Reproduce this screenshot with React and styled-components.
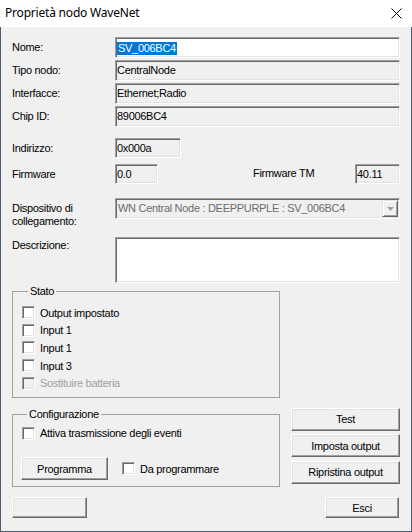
import React from "react";
import styled, { createGlobalStyle } from "styled-components";

const GlobalStyle = createGlobalStyle`
    * { box-sizing: border-box; }
    html, body { margin: 0; padding: 0; background: #f0f0f0; }
    body {
        font-family: "Liberation Sans", Arial, sans-serif;
        font-size: 11px;
        letter-spacing: -0.3px;
        color: #000;
    }
`;

const Window = styled.div`
    width: 412px;
    height: 532px;
    display: flex;
    flex-direction: column;
    background: #f0f0f0;
`;

const TitleBar = styled.div`
    height: 27px;
    flex-shrink: 0;
    display: flex;
    align-items: center;
    justify-content: space-between;
    background: #fff;
    padding: 0 10px 0 5px;
`;

const Title = styled.div`
    font-family: "Noto Sans", "Open Sans", sans-serif;
    font-size: 12px;
    letter-spacing: -0.2px;
    line-height: 16px;
    margin-top: -1px;
`;

const Close = styled.svg`
    width: 11px;
    height: 11px;
    display: block;
`;

const Body = styled.div`
    flex: 1;
    display: flex;
    flex-direction: column;
    padding: 10px 11px 0 11px;
    border: 1px solid #485d75;
    border-top: none;
`;

const FieldRow = styled.div`
    display: flex;
    align-items: ${(p) => (p.$start ? "flex-start" : "center")};
    margin-top: ${(p) => p.$top || 0}px;
`;

const Label = styled.div`
    width: 103px;
    flex-shrink: 0;
    line-height: 13px;
    padding-top: ${(p) => p.$pad || 0}px;
    white-space: nowrap;
`;

const SubLabel = styled.div`
    margin-left: 95px;
    line-height: 13px;
    margin-top: -2px;
    white-space: nowrap;
`;

const Field = styled.div`
    width: ${(p) => (p.$w ? `${p.$w}px` : "auto")};
    flex: ${(p) => (p.$w ? "0 0 auto" : "1")};
    height: ${(p) => p.$h || 21}px;
    margin-left: ${(p) => (p.$push ? "auto" : "0")};
    display: flex;
    align-items: ${(p) => (p.$tall ? "flex-start" : "center")};
    padding-left: 1px;
    background: ${(p) => (p.$edit ? "#fff" : "#f0f0f0")};
    border: 1px solid;
    border-color: #a0a0a0 #fff #fff #a0a0a0;
    box-shadow: inset 1px 1px 0 #696969, inset -1px -1px 0 #e3e3e3;
    line-height: 13px;
    white-space: nowrap;
    overflow: hidden;
`;

const Selected = styled.span`
    background: #0078d7;
    color: #fff;
    padding: 0 1px 0 1px;
    margin-top: 1px;
`;

const Combo = styled(Field)`
    color: #6d6d6d;
    padding-left: 2px;
    padding-right: 1px;
    justify-content: space-between;
`;

const ComboArrow = styled.div`
    width: 16px;
    height: 17px;
    display: flex;
    align-items: center;
    justify-content: center;
    background: #f0f0f0;
    border: 1px solid;
    border-color: #e3e3e3 #696969 #696969 #e3e3e3;
    box-shadow: inset 1px 1px 0 #fff, inset -1px -1px 0 #a0a0a0;
`;

const Group = styled.fieldset`
    width: 268px;
    flex-shrink: 0;
    margin: ${(p) => p.$top || 0}px 0 0 0;
    padding: ${(p) => p.$pad};
    border: 1px solid #a0a0a0;
    min-width: 0;
    display: flex;
    flex-direction: column;
`;

const Legend = styled.legend`
    margin-left: 6px;
    padding: 0 2px;
    line-height: 13px;
`;

const CheckRow = styled.label`
    display: flex;
    align-items: center;
    gap: 5px;
    height: 17.6px;
    padding-left: ${(p) => p.$indent || 0}px;
    color: ${(p) => (p.$disabled ? "#a0a0a0" : "#000")};
    white-space: nowrap;
`;

const Box = styled.span`
    width: 13px;
    height: 13px;
    flex-shrink: 0;
    background: ${(p) => (p.$disabled ? "#f0f0f0" : "#fff")};
    border: 1px solid;
    border-color: #a0a0a0 #fff #fff #a0a0a0;
    box-shadow: inset 1px 1px 0 #696969, inset -1px -1px 0 #e3e3e3;
`;

const Button = styled.button`
    width: ${(p) => (p.$w ? `${p.$w}px` : "100%")};
    height: ${(p) => p.$h || 23}px;
    margin: 0;
    padding: 0;
    font: inherit;
    letter-spacing: inherit;
    color: #000;
    background: #f0f0f0;
    border: 1px solid;
    border-color: #fff #696969 #696969 #fff;
    box-shadow: inset -1px -1px 0 #a0a0a0, inset 1px 1px 0 #e3e3e3;
    border-radius: 0;
`;

const LowerRow = styled.div`
    display: flex;
    align-items: flex-start;
    justify-content: space-between;
    margin-top: 10px;
`;

const ButtonColumn = styled.div`
    width: 109px;
    display: flex;
    flex-direction: column;
    gap: 3.5px;
`;

const ProgramRow = styled.div`
    display: flex;
    align-items: center;
    gap: 14px;
    margin-top: 15px;
`;

const BottomRow = styled.div`
    display: flex;
    justify-content: space-between;
    margin-top: 10px;
    padding-right: 1px;
`;

const Check = ({ children, disabled, indent }) => (
    <CheckRow $disabled={disabled} $indent={indent}>
        <Box $disabled={disabled} />
        {children}
    </CheckRow>
);

const App = () => {
    const stato = ["Output impostato", "Input 1", "Input 1", "Input 3"];

    return (
        <>
            <GlobalStyle />
            <Window>
                <TitleBar>
                    <Title>Proprietà nodo WaveNet</Title>
                    <Close viewBox="0 0 11 11">
                        <path d="M0.5 0.5 L10.5 10.5 M10.5 0.5 L0.5 10.5" stroke="#000" strokeWidth="1" />
                    </Close>
                </TitleBar>
                <Body>
                    <FieldRow>
                        <Label>Nome:</Label>
                        <Field $edit>
                            <Selected>SV_006BC4</Selected>
                        </Field>
                    </FieldRow>
                    <FieldRow $top={2}>
                        <Label>Tipo nodo:</Label>
                        <Field>CentralNode</Field>
                    </FieldRow>
                    <FieldRow $top={2}>
                        <Label>Interfacce:</Label>
                        <Field>Ethernet;Radio</Field>
                    </FieldRow>
                    <FieldRow $top={2}>
                        <Label>Chip ID:</Label>
                        <Field>89006BC4</Field>
                    </FieldRow>

                    <FieldRow $top={11}>
                        <Label>Indirizzo:</Label>
                        <Field $w={66} $h={20}>0x000a</Field>
                    </FieldRow>
                    <FieldRow $top={6}>
                        <Label>Firmware</Label>
                        <Field $w={43} $h={20}>0.0</Field>
                        <SubLabel>Firmware TM</SubLabel>
                        <Field $w={45} $h={20} $push>40.11</Field>
                    </FieldRow>

                    <FieldRow $top={14} $start>
                        <Label $pad={4}>
                            Dispositivo di
                            <br />
                            collegamento:
                        </Label>
                        <Combo>
                            WN Central Node : DEEPPURPLE : SV_006BC4
                            <ComboArrow>
                                <svg width="7" height="4" viewBox="0 0 7 4">
                                    <polygon points="0,0 7,0 3.5,4" fill="#a0a0a0" />
                                </svg>
                            </ComboArrow>
                        </Combo>
                    </FieldRow>
                    <FieldRow $top={9} $start>
                        <Label $pad={2}>Descrizione:</Label>
                        <Field $edit $h={46} />
                    </FieldRow>

                    <Group $top={1.5} $pad="6.5px 0 5px 9px">
                        <Legend>Stato</Legend>
                        {stato.map((s, i) => (
                            <Check key={i}>{s}</Check>
                        ))}
                        <Check disabled>Sostituire batteria</Check>
                    </Group>

                    <LowerRow>
                        <Group $pad="3.5px 0 6px 8px">
                            <Legend>Configurazione</Legend>
                            <Check indent={1}>Attiva trasmissione degli eventi</Check>
                            <ProgramRow>
                                <Button $w={87}>Programma</Button>
                                <Check>Da programmare</Check>
                            </ProgramRow>
                        </Group>
                        <ButtonColumn>
                            <Button>Test</Button>
                            <Button>Imposta output</Button>
                            <Button>Ripristina output</Button>
                        </ButtonColumn>
                    </LowerRow>

                    <BottomRow>
                        <Button $w={75} $h={21} />
                        <Button $w={74} $h={21}>Esci</Button>
                    </BottomRow>
                </Body>
            </Window>
        </>
    );
};

export default App;
